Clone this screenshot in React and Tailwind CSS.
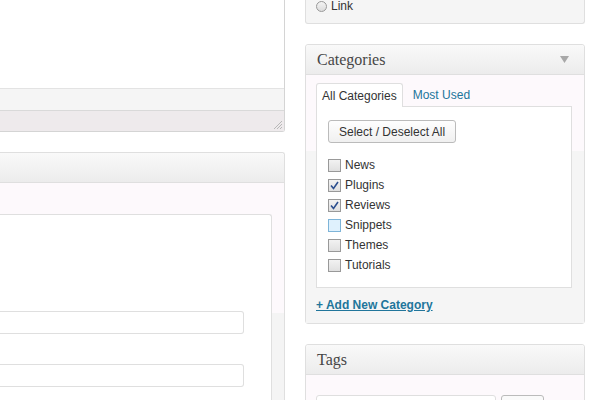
const sans = { fontFamily: '"Liberation Sans", Arial, sans-serif' };

const Checkbox = ({ checked, hover }) => (
  <span
    className={`w-[13px] h-[13px] border flex items-center justify-center ${
      hover ? "border-[#7eb4d8] bg-[#dff1fd]" : "border-[#999] bg-[linear-gradient(#f2f2f2,#e0e0e0)]"
    }`}
  >
    {checked && (
      <svg width="9" height="9" viewBox="0 0 9 9">
        <path d="M1 4.5 L3.5 7.5 L8 1" fill="none" stroke="#2c4f8f" strokeWidth="1.6" />
      </svg>
    )}
  </span>
);

const BoxHeader = ({ title, arrow }) => (
  <div className="h-[30px] shrink-0 flex items-center justify-between px-[11px] border-b border-[#dfdfdf] bg-[linear-gradient(#f9f9f9,#ececec)] rounded-t-[3px]">
    <span className="text-[16px] text-[#464646]" style={{ fontFamily: '"Liberation Serif", "Times New Roman", serif' }}>
      {title}
    </span>
    {arrow && (
      <svg width="9" height="7" viewBox="0 0 9 7" className="mr-[4px]">
        <path d="M0 0 H9 L4.5 7 Z" fill="#a8a8a8" />
      </svg>
    )}
  </div>
);

const cats = [
  { name: "News" },
  { name: "Plugins", checked: true },
  { name: "Reviews", checked: true },
  { name: "Snippets", hover: true },
  { name: "Themes" },
  { name: "Tutorials" },
];

export default function App() {
  return (
    <div className="w-[600px] h-[400px] overflow-hidden bg-white flex gap-[20px] text-[12px] text-[#333]" style={sans}>
      {/* left column */}
      <div className="w-[285px] shrink-0 flex flex-col">
        <div className="shrink-0 border-r border-b border-[#d4d4d4] rounded-br-[3px]">
          <div className="h-[88px] bg-white" />
          <div className="h-[22px] bg-[#f5f5f5] border-t border-[#e3e3e3]" />
          <div className="h-[21px] bg-[#eeeaec] border-t border-[#d9d9d9] flex justify-end items-end">
            <svg width="11" height="11" viewBox="0 0 11 11" className="mb-[1px] mr-[1px]">
              <path d="M10 2 L2 10 M10 5 L5 10 M10 8 L8 10" stroke="#b8b8b8" strokeWidth="1" />
            </svg>
          </div>
        </div>

        <div className="mt-[20px] border-r border-t border-[#dfdfdf] rounded-tr-[3px] flex-1 flex flex-col">
          <div className="h-[30px] shrink-0 border-b border-[#dfdfdf] bg-[linear-gradient(#f9f9f9,#ececec)] rounded-tr-[3px]" />
          <div className="flex-1 bg-[linear-gradient(#fdf9fc_0,#fdf9fc_130px,#f4f4f4_130px)] pt-[31px] pr-[12px]">
            <div className="bg-white border-r border-t border-[#dfdfdf] rounded-tr-[3px] h-[300px] pt-[96px] pr-[27px] flex flex-col gap-[30px]">
              <div className="h-[23px] border-r border-t border-b border-[#dfdfdf] rounded-r-[3px]" />
              <div className="h-[23px] border-r border-t border-b border-[#dfdfdf] rounded-r-[3px]" />
            </div>
          </div>
        </div>
      </div>

      {/* right column */}
      <div className="w-[280px] shrink-0 flex flex-col">
        <div className="h-[24px] shrink-0 border-l border-r border-b border-[#dfdfdf] rounded-b-[3px] bg-[#f5f5f5] flex items-start pl-[10px]">
          <div className="flex items-center gap-[4px] -mt-[3px]">
            <span className="w-[11px] h-[11px] rounded-full border border-[#999] bg-[linear-gradient(#f4f4f4,#dcdcdc)]" />
            <span className="text-[12px]">Link</span>
          </div>
        </div>

        <div className="mt-[20px] shrink-0 border border-[#dfdfdf] rounded-[3px]">
          <BoxHeader title="Categories" arrow />
          <div className="bg-[linear-gradient(#fdf9fc_0,#fdf9fc_76px,#f5f5f5_76px)] px-[10px] pt-[8px] pb-[9px]">
            <div className="flex items-end">
              <div className="h-[24px] -mb-px relative px-[5px] border border-b-0 border-[#dfdfdf] rounded-t-[3px] bg-white flex items-center">
                All Categories
              </div>
              <div className="h-[24px] -mb-px px-[10px] flex items-center text-[#21759b]">Most Used</div>
            </div>
            <div className="w-[256px] h-[182px] bg-white border border-[#dfdfdf] pt-[13px] pl-[11px]">
              <button
                className="h-[23px] px-[10px] border border-[#bbb] rounded-[3px] bg-[linear-gradient(#fefefe,#f0f0f0)] text-[12px] text-[#333]"
                style={sans}
              >
                Select / Deselect All
              </button>
              <div className="mt-[12px] flex flex-col">
                {cats.map((c) => (
                  <label key={c.name} className="h-[20px] flex items-center gap-[4px]">
                    <Checkbox checked={c.checked} hover={c.hover} />
                    <span>{c.name}</span>
                  </label>
                ))}
              </div>
            </div>
            <a className="block mt-[8px] leading-[18px] font-bold underline text-[#21759b] text-[12px]">+ Add New Category</a>
          </div>
        </div>

        <div className="mt-[20px] shrink-0 h-[80px] border border-[#dfdfdf] rounded-[3px] flex flex-col">
          <BoxHeader title="Tags" />
          <div className="bg-[#fdf9fc] flex-1 px-[10px] pt-[20px] flex gap-[5px]">
            <div className="w-[180px] h-[24px] border border-[#dfdfdf] rounded-[3px] bg-white" />
            <div className="w-[43px] h-[24px] border border-[#bbb] rounded-[3px] bg-[#fafafa]" />
          </div>
        </div>
      </div>
    </div>
  );
}
